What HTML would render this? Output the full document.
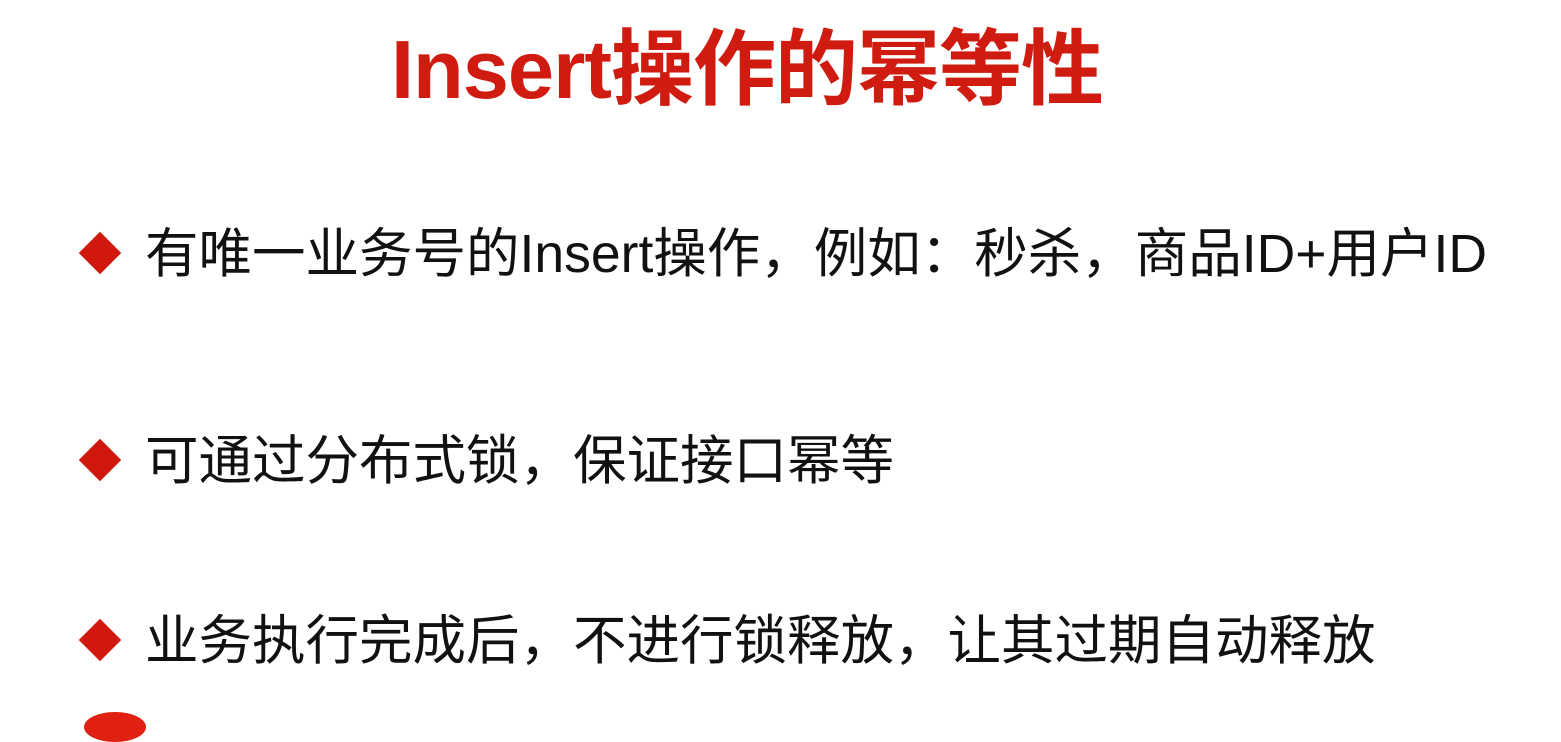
<!DOCTYPE html>
<html><head><meta charset="utf-8"><style>
body{margin:0;width:1561px;height:716px;background:#fff;position:relative;overflow:hidden;font-family:"Liberation Sans","Noto Sans CJK SC",sans-serif}
.t{position:absolute;left:391px;top:2px;font-size:83px;font-weight:bold;color:#d01c10;white-space:nowrap;letter-spacing:-1px}
.d{position:absolute;width:30px;height:30px;background:#d0180c;transform:rotate(45deg)}
.l{position:absolute;left:145px;font-size:53.5px;color:#111;white-space:nowrap;line-height:60px}
.arc{position:absolute;left:84px;top:712px;width:62px;height:30px;border-radius:50%;background:#e02010}
</style></head><body>
<div class="t">Insert操作的幂等性</div>
<div class="d" style="left:85px;top:238px"></div>
<div class="l" style="top:225px">有唯一业务号的Insert操作，例如：秒杀，商品ID+用户ID</div>
<div class="d" style="left:85px;top:445px"></div>
<div class="l" style="top:432px">可通过分布式锁，保证接口幂等</div>
<div class="d" style="left:85px;top:625px"></div>
<div class="l" style="top:612px">业务执行完成后，不进行锁释放，让其过期自动释放</div>
<div class="arc"></div>
</body></html>
